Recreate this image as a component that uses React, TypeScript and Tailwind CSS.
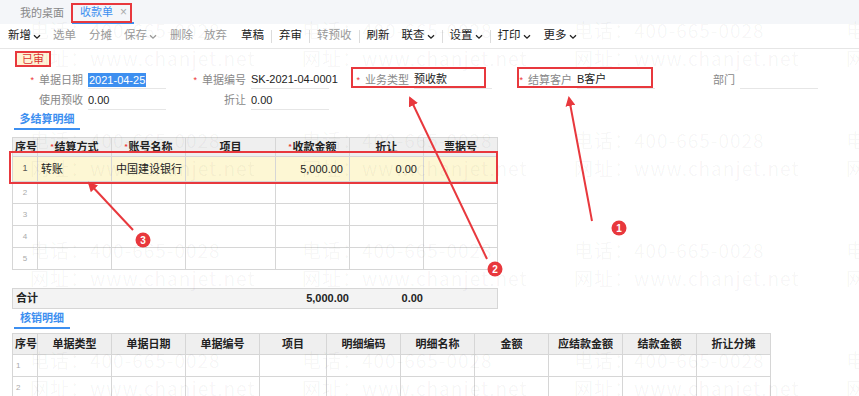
const font = { fontFamily: '"Liberation Sans", "Noto Sans CJK SC", sans-serif' }

function Caret() {
  return (
    <svg width="8" height="6" viewBox="0 0 8 6" className="ml-[2px] mt-[1px]">
      <path d="M1 1.2 L4 4.2 L7 1.2" fill="none" stroke="currentColor" strokeWidth="1.3" />
    </svg>
  )
}

function Sep({ cls = "mx-[7px]" }: { cls?: string }) {
  return <span className={`h-[13px] w-px bg-[#dcdcdc] ${cls}`} />
}

function Tool({ label, on = true, caret = false, cls = "" }: { label: string; on?: boolean; caret?: boolean; cls?: string }) {
  return (
    <span className={`flex items-center ${on ? "text-[#222]" : "text-[#9a9a9a]"} ${cls}`}>
      {label}
      {caret && <Caret />}
    </span>
  )
}

function Field({ label, value, star = false, selected = false }: { label: string; value?: string; star?: boolean; selected?: boolean }) {
  return (
    <div className="flex h-full items-center w-[163px]">
      <div className="w-[80px] whitespace-nowrap text-right text-[#888]">
        {star && <span className="mr-[5px] text-[#e33] text-[9px] align-middle">*</span>}
        {label}
      </div>
      <div className="ml-[5px] flex h-[18px] w-[78px] items-center whitespace-nowrap border-b border-[#e6e6e6] text-[#222]">
        {selected ? <span className="bg-[#3d8ff0] px-px text-white leading-[14px]">{value}</span> : value}
      </div>
    </div>
  )
}

function SectionTab({ label, w }: { label: string; w: string }) {
  return (
    <div className={`ml-[14px] flex h-[19px] items-center justify-center border-b-2 border-[#3d8ff0] text-[11px] font-bold text-[#3d8ff0] ${w}`}>
      {label}
    </div>
  )
}

const Star = () => <span className="mr-px text-[8px] text-[#e33] align-top">*</span>

function Table1() {
  const cols = "grid grid-cols-[25px_74px_74px_90px_74px_74px_74px]"
  const head = [
    { t: "序号", c: "justify-start pl-[2px]" },
    { t: "结算方式", s: true, c: "justify-center" },
    { t: "账号名称", s: true, c: "justify-center" },
    { t: "项目", c: "justify-center" },
    { t: "收款金额", s: true, c: "justify-center" },
    { t: "折让", c: "justify-center" },
    { t: "票据号", c: "justify-center" },
  ]
  return (
    <div className="ml-[12px] mt-[7px] w-[486px] border-l border-t border-[#d6d6d6]">
      <div className={`${cols} h-[19px] bg-[#efefef] text-[11px] font-bold text-[#222]`}>
        {head.map((h, i) => (
          <div key={i} className={`flex items-center border-b border-r border-[#d6d6d6] ${h.c}`}>
            {h.s && <Star />}
            {h.t}
          </div>
        ))}
      </div>
      <div className={`${cols} h-[25px] bg-[#fdf7d4] text-[11px] text-[#222]`}>
        <div className="flex items-center justify-center border-b border-r border-[#d6d6d6] text-[9px] text-[#555]">1</div>
        <div className="flex items-center pl-[3px] border-b border-r border-[#d6d6d6]">转账</div>
        <div className="flex items-center pl-[4px] border-b border-r border-[#d6d6d6]">中国建设银行</div>
        <div className="border-b border-r border-[#d6d6d6]" />
        <div className="flex items-center justify-end pr-[6px] border-b border-r border-[#d6d6d6]">5,000.00</div>
        <div className="flex items-center justify-end pr-[6px] border-b border-r border-[#d6d6d6]">0.00</div>
        <div className="border-b border-r border-[#d6d6d6]" />
      </div>
      {[2, 3, 4, 5].map((n) => (
        <div key={n} className={`${cols} h-[22px]`}>
          <div className="flex items-center justify-center border-b border-r border-[#d6d6d6] text-[8px] text-[#aaa]">{n}</div>
          {[0, 1, 2, 3, 4, 5].map((k) => (
            <div key={k} className="border-b border-r border-[#d6d6d6]" />
          ))}
        </div>
      ))}
    </div>
  )
}

function Total() {
  return (
    <div className="ml-[12px] mt-[18px] grid h-[21px] w-[486px] grid-cols-[263px_74px_74px_75px] items-center border border-[#d6d6d6] bg-[#f3f3f3] text-[11px] font-bold text-[#222]">
      <div className="pl-[3px]">合计</div>
      <div className="text-right pr-[1px]">5,000.00</div>
      <div className="text-right pr-[1px]">0.00</div>
      <div />
    </div>
  )
}

function Table2() {
  const cols = "grid grid-cols-[25px_74px_74px_74px_67px_74px_74px_74px_74px_74px_74px]"
  const head = ["序号", "单据类型", "单据日期", "单据编号", "项目", "明细编码", "明细名称", "金额", "应结款金额", "结款金额", "折让分摊"]
  return (
    <div className="ml-[12px] mt-[4px] w-[759px] border-l border-t border-[#d6d6d6]">
      <div className={`${cols} h-[21px] bg-[#efefef] text-[11px] font-bold text-[#222]`}>
        {head.map((h, i) => (
          <div key={i} className={`flex items-center border-b border-r border-[#d6d6d6] ${i === 0 ? "justify-start pl-[2px]" : "justify-center"}`}>
            {h}
          </div>
        ))}
      </div>
      {[1, 2].map((n) => (
        <div key={n} className={`${cols} h-[22px]`}>
          <div className="flex items-center pl-[3px] border-b border-r border-[#d6d6d6] text-[8px] text-[#aaa]">{n}</div>
          {[0, 1, 2, 3, 4, 5, 6, 7, 8, 9].map((k) => (
            <div key={k} className="border-b border-r border-[#d6d6d6]" />
          ))}
        </div>
      ))}
    </div>
  )
}

function Watermark() {
  const xs = [30, 302, 574, 846]
  const ys = [30, 140, 250, 360]
  return (
    <div className="pointer-events-none absolute inset-0 overflow-hidden text-[19px] leading-[24px] tracking-[1px] text-[rgba(0,0,0,0.045)]" style={{ fontFamily: '"Noto Sans CJK SC", "Noto Sans", sans-serif' }}>
      {ys.map((y) =>
        xs.map((x) => (
          <div key={`${x}-${y}`}>
            <span className="absolute whitespace-nowrap" style={{ left: x, top: y - 12 }}>电话：400-665-0028</span>
            <span className="absolute whitespace-nowrap" style={{ left: x, top: y + 16 }}>网址：www.chanjet.net</span>
          </div>
        ))
      )}
    </div>
  )
}

function Marks() {
  const red = "#e8383d"
  const arrows = [
    { x1: 592, y1: 221, x2: 569, y2: 98, cx: 619, cy: 228, n: "1" },
    { x1: 487, y1: 259, x2: 410, y2: 98, cx: 495, cy: 269, n: "2" },
    { x1: 133, y1: 230, x2: 89, y2: 183, cx: 143, cy: 240, n: "3" },
  ]
  return (
    <svg className="pointer-events-none absolute inset-0" width="859" height="396">
      <defs>
        <marker id="ah" viewBox="0 0 10 10" refX="8" refY="5" markerWidth="5" markerHeight="5" orient="auto">
          <path d="M0 0 L10 5 L0 10 z" fill={red} />
        </marker>
      </defs>
      <g fill="none" stroke={red} strokeWidth="2">
        <rect x="72" y="4" width="59" height="18" />
        <rect x="352" y="68" width="133" height="19" />
        <rect x="518" y="68" width="134" height="19" />
        <rect x="10" y="152" width="487" height="31" />
      </g>
      {arrows.map((a) => (
        <g key={a.n}>
          <line x1={a.x1} y1={a.y1} x2={a.x2} y2={a.y2} stroke={red} strokeWidth="2" markerEnd="url(#ah)" />
          <circle cx={a.cx} cy={a.cy} r="7.5" fill={red} />
          <text x={a.cx} y={a.cy + 3.5} textAnchor="middle" fontSize="10" fontWeight="bold" fill="#fff" fontFamily="Liberation Sans, sans-serif">
            {a.n}
          </text>
        </g>
      ))}
    </svg>
  )
}

export default function App() {
  return (
    <div className="relative h-[396px] w-[859px] overflow-hidden bg-white text-[11px]" style={font}>
      {/* tab strip */}
      <div className="flex h-[24px] items-end bg-[#f4f6f9] pl-[20px]">
        <div className="flex h-[22px] w-[44px] items-center text-[11px] text-[#888]">我的桌面</div>
        <div className="ml-[8px] flex h-[22px] w-[62px] items-center border-b-2 border-[#3d8ff0] pl-[8px] text-[11px] text-[#3d8ff0]">
          收款单
          <span className="ml-[7px] text-[12px] text-[#aaa]">×</span>
        </div>
      </div>

      {/* toolbar */}
      <div className="flex h-[25px] items-center border-b border-[#e6e6e6] pl-[8px] text-[11.5px]">
        <Tool label="新增" caret />
        <Tool label="选单" on={false} cls="ml-[12px]" />
        <Tool label="分摊" on={false} cls="ml-[13px]" />
        <Tool label="保存" on={false} caret cls="ml-[12px]" />
        <Tool label="删除" on={false} cls="ml-[13px]" />
        <Tool label="放弃" on={false} cls="ml-[11px]" />
        <Tool label="草稿" cls="ml-[14px]" />
        <Sep />
        <Tool label="弃审" />
        <Sep />
        <Tool label="转预收" on={false} />
        <Sep />
        <Tool label="刷新" />
        <Tool label="联查" caret cls="ml-[12px]" />
        <Sep />
        <Tool label="设置" caret />
        <Sep />
        <Tool label="打印" caret />
        <Tool label="更多" caret cls="ml-[13px]" />
      </div>

      {/* status badge */}
      <div className="pl-[15px] pt-[2px]">
        <div className="flex h-[16px] w-[36px] items-center justify-center border-2 border-[#e8383d] bg-[#fff4d6] text-[11px] text-[#d33]">已审</div>
      </div>

      {/* header form */}
      <div className="ml-[3px] mt-[3px] flex h-[20px]">
        <Field label="单据日期" value="2021-04-25" star selected />
        <Field label="单据编号" value="SK-2021-04-0001" star />
        <Field label="业务类型" value="预收款" star />
        <Field label="结算客户" value="B客户" star />
        <Field label="部门" />
      </div>
      <div className="ml-[3px] flex h-[21px]">
        <Field label="使用预收" value="0.00" />
        <Field label="折让" value="0.00" />
      </div>

      <SectionTab label="多结算明细" w="w-[66px]" />
      <Table1 />
      <Total />

      <div className="mt-px">
        <SectionTab label="核销明细" w="w-[56px]" />
      </div>
      <Table2 />

      <Watermark />
      <Marks />
    </div>
  )
}
